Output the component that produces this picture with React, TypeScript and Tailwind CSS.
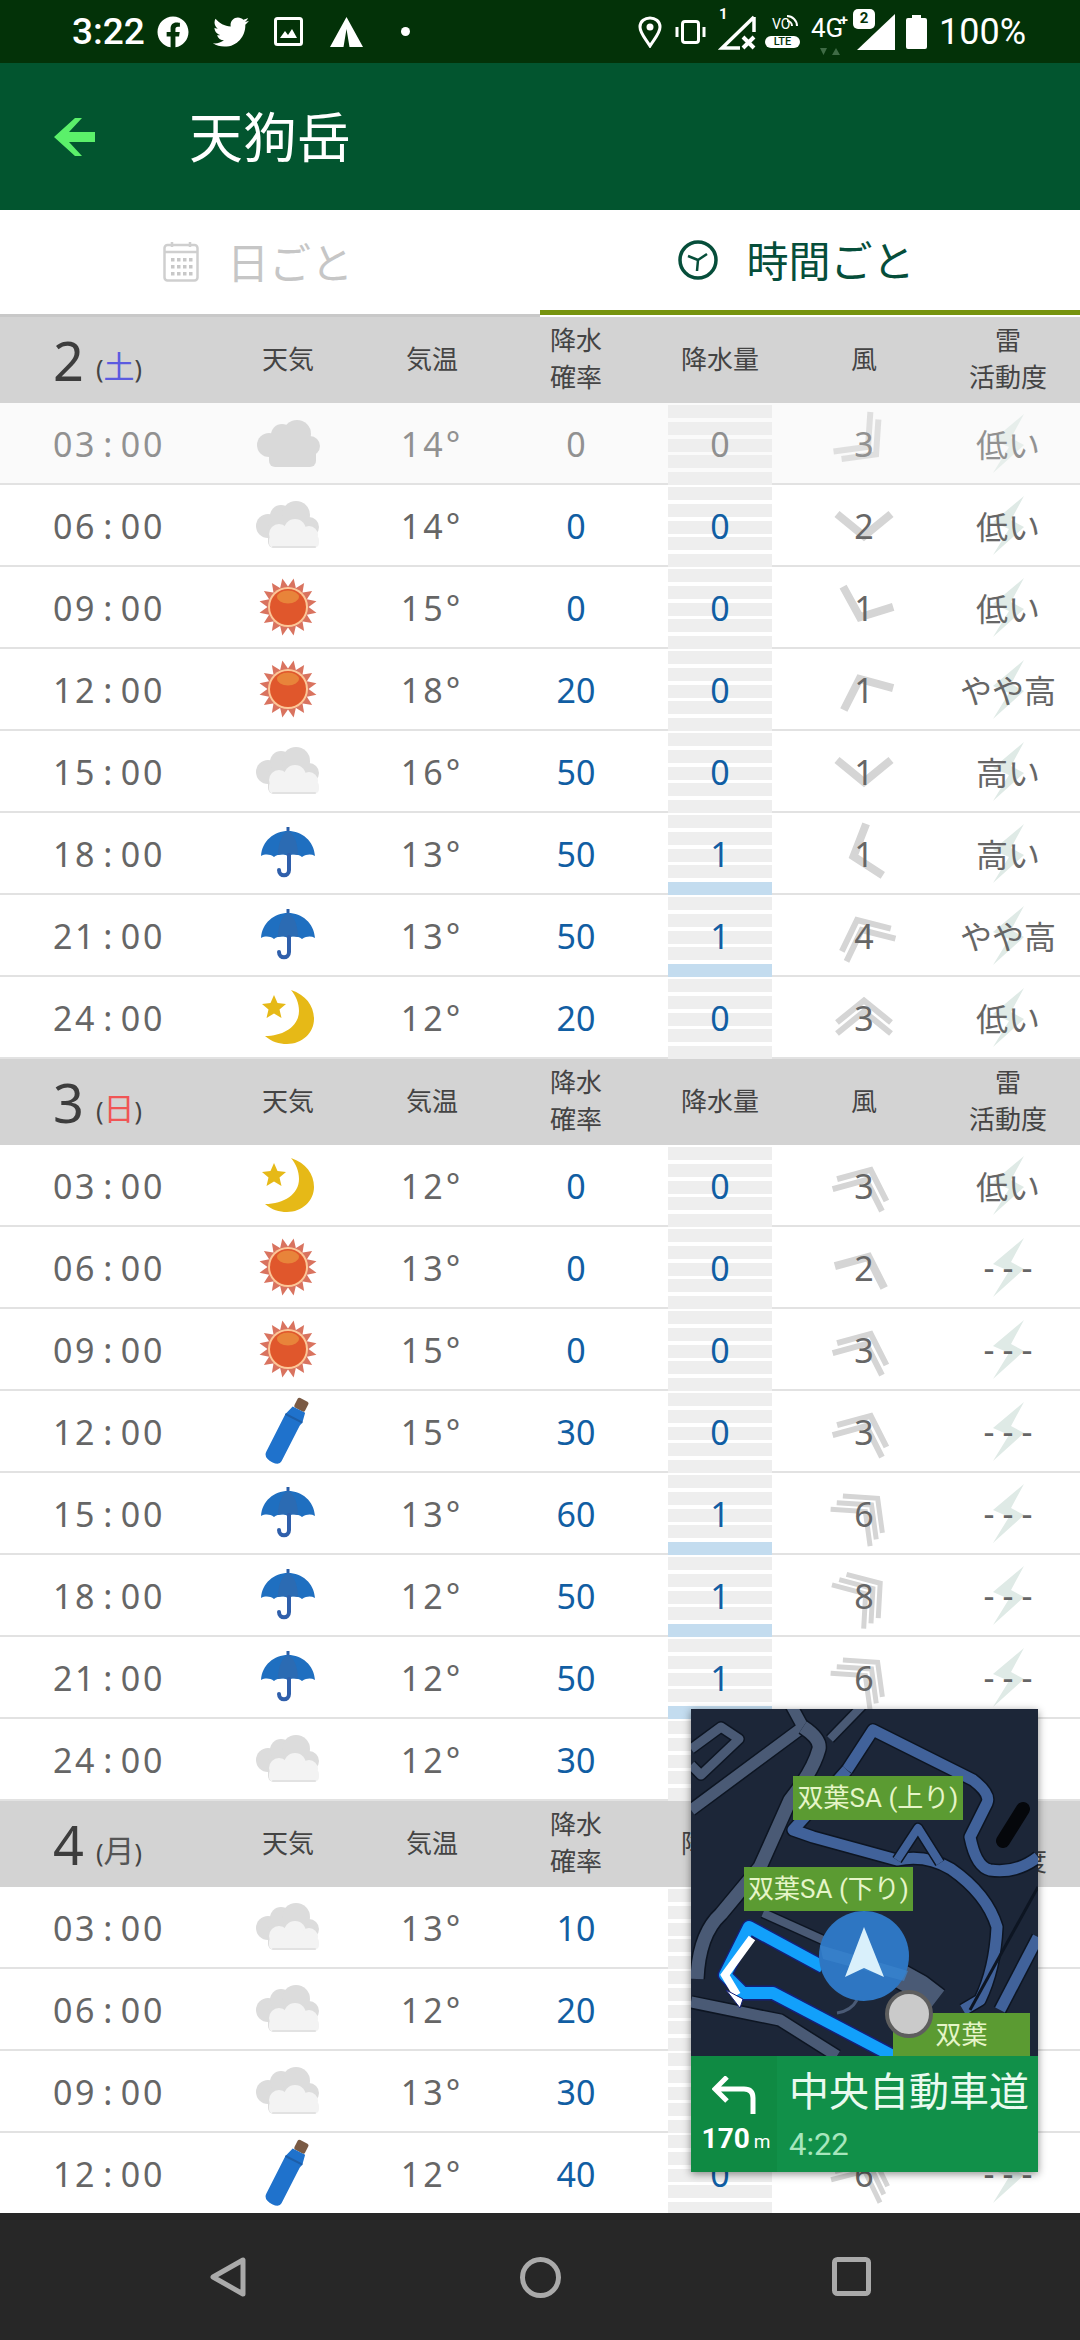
import React from 'react';
import { FaFacebook, FaTwitter } from 'react-icons/fa';

type Weather = 'nightcloud' | 'cloud' | 'sun' | 'rain' | 'closed' | 'moon';

interface Row {
  time: string;
  weather: Weather;
  temp: number;
  prob: number;
  rain: number;
  wind: number;
  rot: number;
  chevrons: number;
  thunder: string;
  dim?: boolean;
}

const r = (
  time: string,
  weather: Weather,
  temp: number,
  prob: number,
  rain: number,
  wind: number,
  rot: number,
  chevrons: number,
  thunder: string,
  dim?: boolean,
): Row => ({ time, weather, temp, prob, rain, wind, rot, chevrons, thunder, dim });

const days = [
  {
    day: '2',
    week: '土',
    color: 'text-[#5b5be0]',
    rows: [
      r('03:00', 'nightcloud', 14, 0, 0, 3, 133, 2, '低い', true),
      r('06:00', 'cloud', 14, 0, 0, 2, 180, 1, '低い'),
      r('09:00', 'sun', 15, 0, 0, 1, 202, 1, '低い'),
      r('12:00', 'sun', 18, 20, 0, 1, 336, 1, 'やや高'),
      r('15:00', 'cloud', 16, 50, 0, 1, 180, 1, '高い'),
      r('18:00', 'rain', 13, 50, 1, 1, 252, 1, '高い'),
      r('21:00', 'rain', 13, 50, 1, 4, 335, 2, 'やや高'),
      r('24:00', 'moon', 12, 20, 0, 3, 0, 2, '低い'),
    ],
  },
  {
    day: '3',
    week: '日',
    color: 'text-[#f05555]',
    rows: [
      r('03:00', 'moon', 12, 0, 0, 3, 24, 2, '低い'),
      r('06:00', 'sun', 13, 0, 0, 2, 24, 1, '---'),
      r('09:00', 'sun', 15, 0, 0, 3, 24, 2, '---'),
      r('12:00', 'closed', 15, 30, 0, 3, 24, 2, '---'),
      r('15:00', 'rain', 13, 60, 1, 6, 43, 3, '---'),
      r('18:00', 'rain', 12, 50, 1, 8, 54, 3, '---'),
      r('21:00', 'rain', 12, 50, 1, 6, 43, 3, '---'),
      r('24:00', 'cloud', 12, 30, 0, 6, 43, 3, '---'),
    ],
  },
  {
    day: '4',
    week: '月',
    color: 'text-[#555555]',
    rows: [
      r('03:00', 'cloud', 13, 10, 0, 6, 25, 3, '---'),
      r('06:00', 'cloud', 12, 20, 0, 6, 25, 3, '---'),
      r('09:00', 'cloud', 13, 30, 0, 6, 25, 3, '---'),
      r('12:00', 'closed', 12, 40, 0, 6, 25, 3, '---'),
    ],
  },
];

const CloudShape = ({ fill }: { fill: string }) => (
  <g fill={fill}>
    <circle cx="13" cy="25" r="12" />
    <circle cx="26" cy="15" r="11" />
    <circle cx="41" cy="14" r="14" />
    <circle cx="54" cy="26" r="10" />
    <rect x="13" y="20" width="47" height="27" rx="6" />
  </g>
);

const WeatherIcon = ({ type }: { type: Weather }) => {
  if (type === 'nightcloud') {
    return (
      <svg width="65" height="47" viewBox="0 0 65 47">
        <CloudShape fill="#d2d2d2" />
      </svg>
    );
  }
  if (type === 'cloud') {
    return (
      <svg width="67" height="48" viewBox="0 0 67 48">
        <CloudShape fill="#dcdcdc" />
        <g fill="#f3f3f3">
          <circle cx="24" cy="33" r="10" />
          <circle cx="40" cy="29" r="11" />
          <circle cx="54" cy="34" r="9" />
          <rect x="14" y="34" width="50" height="13" rx="5" />
        </g>
        <path d="M18 46 H60" stroke="#e2e2e2" strokeWidth="2" strokeLinecap="round" />
      </svg>
    );
  }
  if (type === 'sun') {
    return (
      <svg width="58" height="58" viewBox="-29 -29 58 58">
        {Array.from({ length: 16 }).map((_, i) => (
          <polygon key={i} points="-4.5,-19 0,-29 4.5,-19" fill="#d9735f" transform={`rotate(${11.25 + i * 22.5})`} />
        ))}
        <circle r="20" fill="#fcc697" />
        <circle r="18" fill="#e0572c" />
        <ellipse cx="0" cy="-10" rx="11" ry="6.5" fill="#e8843a" />
      </svg>
    );
  }
  if (type === 'rain') {
    return (
      <svg width="54" height="52" viewBox="0 0 54 52">
        <path d="M27 0 V6" stroke="#2a5ea8" strokeWidth="3" />
        <path
          d="M0 29 C1 14 13 4 27 4 C41 4 53 14 54 29 C50 27 46 27 41 30 C37 27 31 27 27 29 C23 27 17 27 13 30 C9 27 4 27 0 29 Z"
          fill="#1f6fc0"
        />
        <path d="M17 28 C17 14 22 6 27 4 C32 6 37 14 37 28 C33 27 30 27 27 29 C24 27 21 27 17 28 Z" fill="#2b6bb3" />
        <path d="M28 28 V43 C28 50 18 50 18 43" fill="none" stroke="#2f5fab" strokeWidth="4" strokeLinecap="round" />
      </svg>
    );
  }
  if (type === 'closed') {
    return (
      <svg width="48" height="68" viewBox="0 0 48 68">
        <g transform="rotate(27 24 34)">
          <rect x="18" y="-1" width="12" height="11" rx="2" fill="#7a5a44" />
          <path d="M17 10 H31 L33 20 L32 24 V64 Q32 69 24 69 Q14 69 14 62 V24 L14 20 Z" fill="#1f72cc" />
          <path d="M14 20 H33" stroke="#1d5ea8" strokeWidth="2" />
        </g>
      </svg>
    );
  }
  return (
    <svg width="52" height="54" viewBox="0 0 52 54">
      <path d="M29 0 C44 5 52 16 52 29 C52 43 40 54 25 54 C17 54 10 52 3 46 C22 46 37 36 37 21 C37 13 34 6 29 0 Z" fill="#e6b917" />
      <polygon points="12,5 15.5,13 24,14 17.5,19.5 19.5,28 12,23.5 4.5,28 6.5,19.5 0,14 8.5,13" fill="#e6b917" />
    </svg>
  );
};

const Wind = ({ rot, chevrons }: { rot: number; chevrons: number }) => {
  const stroke = chevrons === 1 ? 8 : chevrons === 2 ? 6 : 5;
  const gap = chevrons === 2 ? 11 : 9;
  const start = -((chevrons - 1) * gap) / 2;
  return (
    <svg width="80" height="80" viewBox="-40 -40 80 80" className="absolute" style={{ transform: `rotate(${rot}deg)` }}>
      {Array.from({ length: chevrons }).map((_, i) => {
        const y = start + i * gap;
        return (
          <polyline
            key={i}
            points={`-27,${y + 11} 0,${y - 11} 27,${y + 11}`}
            fill="none"
            stroke="#d5d5d5"
            strokeWidth={stroke}
          />
        );
      })}
    </svg>
  );
};

const Bolt = () => (
  <svg width="31" height="59" viewBox="0 0 31 59" className="absolute">
    <polygon points="31,0 0,26 16,33 0,59 31,31 18,24" fill="#dfeae6" />
  </svg>
);

const Stripes = ({ rain }: { rain: number }) => (
  <div className="absolute inset-x-[20px] top-0 bottom-[-2px] flex flex-col justify-between pt-[2px]">
    {[0, 1, 2, 3, 4].map((i) => (
      <div key={i} className={`h-[13px] ${i === 4 && rain > 0 ? 'bg-[#c3dcef]' : 'bg-[#eeeeee]'}`} />
    ))}
  </div>
);

const Header = ({ day, week, color }: { day: string; week: string; color: string }) => (
  <div className="flex h-[86px] bg-[#d3d3d3] pb-[2px] text-[26px] leading-[37px] text-[#444444]">
    <div className="flex w-[216px] items-baseline pl-[53px] pt-[12px]">
      <span className="text-[54px] leading-[62px] text-[#3d3d3d]">{day}</span>
      <span className="ml-[12px] -translate-y-[3px] text-[25px] leading-[30px]">(</span>
      <span className={`-translate-y-[3px] text-[31px] leading-[30px] ${color}`}>{week}</span>
      <span className="-translate-y-[3px] text-[25px] leading-[30px]">)</span>
    </div>
    <div className="flex w-[144px] items-center justify-center">天気</div>
    <div className="flex w-[144px] items-center justify-center">気温</div>
    <div className="flex w-[144px] items-center justify-center text-center">
      降水
      <br />
      確率
    </div>
    <div className="flex w-[144px] items-center justify-center">降水量</div>
    <div className="flex w-[144px] items-center justify-center">風</div>
    <div className="flex w-[144px] items-center justify-center text-center">
      雷
      <br />
      活動度
    </div>
  </div>
);

const HourRow = ({ row }: { row: Row }) => {
  const blue = row.dim ? 'text-[#666666]' : 'text-[#115ea3]';
  const fade = row.dim ? 'opacity-70' : '';
  return (
    <div className={`flex h-[82px] shrink-0 border-b-2 border-[#e2e2e2] text-[34px] text-[#666666] ${row.dim ? 'bg-[#fafafa]' : 'bg-white'}`}>
      <div className={`flex w-[216px] items-center justify-center pl-[2px] pt-[2px] tracking-[2.6px] ${fade}`}>{row.time.replace(':', ' : ').replace(/ /g, '\u200a')}</div>
      <div className={`flex w-[144px] items-center justify-center ${row.dim ? 'opacity-80' : ''}`}>
        <WeatherIcon type={row.weather} />
      </div>
      <div className={`flex w-[144px] items-center justify-center pt-[2px] tracking-[3px] ${fade}`}>{row.temp}°</div>
      <div className={`flex w-[144px] items-center justify-center pt-[2px] ${blue} ${fade}`}>{row.prob}</div>
      <div className="relative flex w-[144px] items-center justify-center pt-[2px]">
        <Stripes rain={row.rain} />
        <span className={`relative ${blue} ${fade}`}>{row.rain}</span>
      </div>
      <div className={`relative flex w-[144px] items-center justify-center ${fade}`}>
        <Wind rot={row.rot} chevrons={row.chevrons} />
        <span className="relative pt-[2px]">{row.wind}</span>
      </div>
      <div className={`relative flex w-[144px] items-center justify-center text-[32px] [font-family:'Noto_Sans_CJK_JP','Noto_Sans',sans-serif] ${fade}`}>
        <Bolt />
        <span className={`relative ${row.thunder === '---' ? "pl-[8px] text-[34px] tracking-[8px] [font-family:'Noto_Sans',sans-serif]" : ''}`}>{row.thunder}</span>
      </div>
    </div>
  );
};

const StatusBar = () => (
  <div className="flex h-[63px] shrink-0 items-center bg-[#033208] pl-[72px] pr-[54px] text-white [font-family:Roboto,sans-serif]">
    <span className="w-[85px] text-[37px] font-medium leading-none">3:22</span>
    <FaFacebook size={32} />
    <FaTwitter size={36} className="ml-[24px]" />
    <svg width="29" height="29" viewBox="0 0 29 29" className="ml-[25px]">
      <rect x="1.5" y="1.5" width="26" height="26" rx="2" fill="none" stroke="#fff" strokeWidth="3" />
      <path d="M6 21 L11 14 L14 18 L18 12 L23 21 Z" fill="#fff" />
    </svg>
    <svg width="35" height="30" viewBox="0 0 35 30" className="ml-[26px]">
      <path d="M17.5 0 L34 30 H20.5 L17.5 12 L14.5 30 H1 Z" fill="#fff" />
    </svg>
    <span className="ml-[37px] h-[9px] w-[9px] rounded-full bg-white" />

    <div className="ml-auto flex items-center">
      <svg width="24" height="32" viewBox="0 0 24 32">
        <path d="M12 30 C7 22 2 17 2 11 C2 5 7 2 12 2 C17 2 22 5 22 11 C22 17 17 22 12 30 Z" fill="none" stroke="#fff" strokeWidth="3" />
        <circle cx="12" cy="11" r="3.5" fill="#fff" />
      </svg>
      <svg width="33" height="24" viewBox="0 0 33 24" className="ml-[12px]">
        <rect x="8.5" y="1.5" width="16" height="21" rx="2.5" fill="none" stroke="#fff" strokeWidth="3" />
        <path d="M3 7 V17 M30 7 V17" stroke="#fff" strokeWidth="3" />
      </svg>
      <div className="relative ml-[11px] h-[36px] w-[38px]">
        <svg width="38" height="36" viewBox="0 0 38 36" className="absolute inset-0">
          <path d="M36 3 V18 M36 3 L4 34 H22" fill="none" stroke="#fff" strokeWidth="3.5" />
          <path d="M25 23 L36 34 M36 23 L25 34" stroke="#fff" strokeWidth="4" />
        </svg>
        <span className="absolute left-[1px] top-[-7px] text-[15px] font-bold leading-none">1</span>
      </div>
      <div className="relative ml-[9px] h-[32px] w-[35px]">
        <span className="absolute left-[7px] top-[1px] text-[14px] leading-none">VO</span>
        <svg width="14" height="14" viewBox="0 0 14 14" className="absolute right-[1px] top-[-2px]">
          <path d="M2 2 A10 10 0 0 1 12 12 M2 7 A5 5 0 0 1 7 12" fill="none" stroke="#fff" strokeWidth="2" />
        </svg>
        <span className="absolute bottom-0 left-0 flex h-[12px] w-[35px] items-center justify-center rounded-[6px] bg-white text-[11px] font-medium leading-none text-[#033208]">LTE</span>
      </div>
      <div className="relative ml-[11px] h-[34px] w-[37px]">
        <span className="absolute left-0 top-0 text-[26px] leading-none">4G</span>
        <span className="absolute right-0 top-[-2px] text-[15px] font-bold leading-none">+</span>
        <svg width="20" height="7" viewBox="0 0 20 7" className="absolute bottom-[-6px] left-[9px]">
          <path d="M0 0 H7 L3.5 7 Z M12 7 H20 L16 0 Z" fill="#3f6b45" />
        </svg>
      </div>
      <div className="relative ml-[9px] h-[36px] w-[38px]">
        <svg width="38" height="36" viewBox="0 0 38 36" className="absolute inset-0">
          <polygon points="38,0 38,36 0,36" fill="#fff" />
        </svg>
        <span className="absolute left-[-4px] top-[-5px] flex h-[20px] w-[22px] items-center justify-center rounded-[5px] bg-white text-[15px] font-bold leading-none text-[#033208]">2</span>
      </div>
      <svg width="21" height="34" viewBox="0 0 21 34" className="ml-[11px]">
        <path d="M6 0 H15 V3 H19 Q21 3 21 5 V32 Q21 34 19 34 H2 Q0 34 0 32 V5 Q0 3 2 3 H6 Z" fill="#fff" />
      </svg>
      <span className="ml-[12px] w-[87px] text-[36px] leading-none">100%</span>
    </div>
  </div>
);

const AppBar = () => (
  <div className="flex h-[147px] shrink-0 items-center bg-[#02552f] pl-[54px]">
    <svg width="41" height="38" viewBox="0 0 41 38">
      <path d="M21 0 H28 L15 14 H41 V24 H15 L28 38 H21 L0 19 Z" fill="#5bf06a" />
    </svg>
    <span className="ml-[94px] text-[54px] leading-none text-white">天狗岳</span>
  </div>
);

const Tabs = () => (
  <div className="flex h-[107px] shrink-0 bg-white text-[42px]">
    <div className="flex w-[540px] items-center justify-center border-b-[3px] border-[#c8c8c8] pr-[24px] text-[#c6c6c6]">
      <svg width="36" height="40" viewBox="0 0 36 40">
        <rect x="1.5" y="3" width="33" height="35.5" rx="3" fill="none" stroke="#cfcfcf" strokeWidth="2.5" />
        <path d="M2 10 H34 M9 0 V5 M27 0 V5" stroke="#cfcfcf" strokeWidth="2.5" />
        {[16, 23, 30].map((y) =>
          [8, 14, 20, 26].map((x) => <rect key={`${x}-${y}`} x={x} y={y} width="3.5" height="3.5" fill="#c8c8c8" />),
        )}
      </svg>
      <span className="ml-[28px]">日ごと</span>
    </div>
    <div className="mb-[2px] flex w-[540px] items-center justify-center border-b-[5px] border-[#76930e] pr-[28px] text-[#064e3a]">
      <svg width="42" height="40" viewBox="0 0 42 40">
        <circle cx="21" cy="20" r="18" fill="none" stroke="#064e3a" strokeWidth="3.5" />
        <path d="M21 20 L11 16 M21 20 L30 14 M21 20 L20 31" stroke="#064e3a" strokeWidth="2.5" />
      </svg>
      <span className="ml-[27px]">時間ごと</span>
    </div>
  </div>
);

const Road = ({ d, color, width }: { d: string; color: string; width: number }) => (
  <>
    <path d={d} fill="none" stroke="#0d1522" strokeWidth={width + 3} strokeLinejoin="round" />
    <path d={d} fill="none" stroke={color} strokeWidth={width} strokeLinejoin="round" />
  </>
);

const Label = ({ text, className }: { text: string; className: string }) => (
  <div className={`absolute flex h-[44px] items-center justify-center bg-[#5b9b32] text-[26px] leading-none text-[#e6f5c8] ${className}`}>
    {text}
  </div>
);

const NavMap = () => (
  <div className="absolute left-[691px] top-[1709px] flex h-[463px] w-[347px] flex-col shadow-[0_2px_8px_rgba(0,0,0,0.45)] [font-family:Roboto,'Noto_Sans_CJK_JP',sans-serif]">
    <div className="relative h-[347px] overflow-hidden bg-[#1c2638]">
      <svg width="347" height="347" viewBox="0 0 347 347" className="absolute inset-0">
        <Road d="M0 40 L30 18 L48 30 L10 66 L0 56" color="#4a5a75" width={9} />
        <Road d="M0 101 L112 18 L100 -4" color="#4a5a75" width={11} />
        <Road d="M112 18 Q130 30 128 40 Q122 62 99 91 L69 158 L30 205 Q8 225 6 270" color="#4a5a75" width={13} />
        <Road d="M139 30 L172 -4" color="#4a5a75" width={8} />
        <Road d="M156 61 L182 21 L242 51 L282 71 Q300 85 296 94 L279 128 Q285 158 299 161 Q325 165 347 148" color="#41629a" width={11} />
        <Road d="M156 61 L102 121 L122 128 L206 151 Q235 145 260 160 Q296 185 306 218 Q304 260 289 291 L272 301" color="#41629a" width={11} />
        <Road d="M206 151 L227 119 L249 154" color="#41629a" width={8} />
        <Road d="M0 293 L89 311 L146 347" color="#4a5a75" width={11} />
        <Road d="M72 204 L132 231" color="#4a5a75" width={8} />
        <Road d="M347 228 L309 301" color="#41629a" width={11} />
        <path d="M347 178 L279 301" fill="none" stroke="#0d1522" strokeWidth="3" />
        <path d="M146 304 Q160 302 166 291" fill="none" stroke="#4a5a75" strokeWidth="3" />
        <path d="M332 100 L312 132" stroke="#05070b" strokeWidth="14" strokeLinecap="round" />
        <Road d="M173 247 L229 278 L246 291" color="#4a5a75" width={24} />
        <path d="M202 347 L82 284 L52 284 L34 266 L58 218 L132 258" fill="none" stroke="#14207a" strokeWidth="15" strokeLinejoin="round" />
        <path d="M202 347 L82 284 L52 284 L34 266 L58 218 L132 258" fill="none" stroke="#12a0fb" strokeWidth="12" strokeLinejoin="round" />
        <path d="M61 229 L34 266 L46 286" fill="none" stroke="#fff" strokeWidth="8" />
        <polygon points="35,281 52,290 49,299" fill="#fff" stroke="#14207a" strokeWidth="1" />
      </svg>
      <Label text="双葉SA (上り)" className="left-[102px] top-[67px] w-[170px]" />
      <Label text="双葉SA (下り)" className="left-[53px] top-[158px] w-[169px]" />
      <Label text="双葉" className="left-[202px] top-[304px] h-[43px] w-[137px]" />
      {/* puck and stop marker sit above the labels */}
      <svg width="347" height="347" viewBox="0 0 347 347" className="absolute inset-0">
        <circle cx="218" cy="305" r="22" fill="#cacaca" stroke="#5e5e5e" strokeWidth="4" />
        <circle cx="173" cy="247" r="45" fill="#2e76c2" />
        <path d="M129 236 L217 262 L213 272 L132 250 Z" fill="#3a83cc" opacity="0.7" />
        <polygon points="173,218 154,268 173,259 193,268" fill="#d9f0fb" />
      </svg>
    </div>
    <div className="flex flex-1 bg-[#119049]">
      <div className="flex w-[86px] flex-col items-center bg-[#0f8a43] pt-[20px] text-white">
        <svg width="44" height="38" viewBox="0 0 44 38">
          <path d="M15 1 L3 13 L15 25 M3 13 H32 Q41 13 41 22 V38" fill="none" stroke="#fff" strokeWidth="5" />
        </svg>
        <div className="mt-[11px] flex items-baseline pl-[4px] leading-none">
          <span className="text-[28px] font-bold">170</span>
          <span className="ml-[4px] text-[19px]">m</span>
        </div>
      </div>
      <div className="flex flex-col pl-[12px] pt-[14px]">
        <span className="text-[40px] leading-[46px] text-[#e9faef]">中央自動車道</span>
        <span className="mt-[11px] text-[31px] leading-[36px] text-[#a7e6bd]">4:22</span>
      </div>
    </div>
  </div>
);

const NavBar = () => (
  <div className="flex h-[127px] shrink-0 items-start bg-[#272727] pl-[210px] pt-[44px]">
    <svg width="36" height="40" viewBox="0 0 36 40">
      <path d="M33 3 V37 L3 20 Z" fill="none" stroke="#aaaaaa" strokeWidth="5" strokeLinejoin="round" />
    </svg>
    <svg width="41" height="41" viewBox="0 0 41 41" className="ml-[274px]">
      <circle cx="20.5" cy="20.5" r="18" fill="none" stroke="#aaaaaa" strokeWidth="5" />
    </svg>
    <svg width="39" height="39" viewBox="0 0 39 39" className="ml-[271px]">
      <rect x="2.5" y="2.5" width="34" height="34" rx="3" fill="none" stroke="#aaaaaa" strokeWidth="5" />
    </svg>
  </div>
);

export default function App() {
  return (
    <div className="relative flex h-[2340px] w-[1080px] flex-col overflow-hidden bg-white [font-family:'Noto_Sans','Noto_Sans_CJK_JP',sans-serif]">
      <StatusBar />
      <AppBar />
      <Tabs />

      {/* Forecast table */}
      <div className="min-h-0 flex-1 overflow-hidden">
        {days.map((d) => (
          <div key={d.day}>
            <Header day={d.day} week={d.week} color={d.color} />
            {d.rows.map((row) => (
              <HourRow key={row.time} row={row} />
            ))}
          </div>
        ))}
      </div>

      <NavBar />
      <NavMap />
    </div>
  );
}
